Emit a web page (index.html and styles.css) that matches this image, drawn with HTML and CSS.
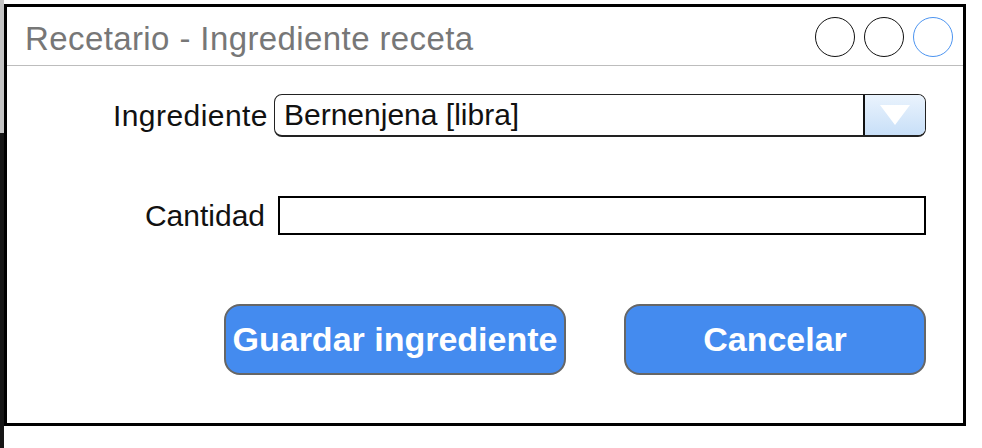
FILE: index.html
```html
<!DOCTYPE html>
<html lang="es">
<head>
<meta charset="utf-8">
<title>Recetario - Ingrediente receta</title>
<link rel="stylesheet" href="styles.css">
</head>
<body>
<div class="page">
  <div class="edge">
    <div class="edge-top"></div>
    <div class="edge-bottom"></div>
  </div>
  <div class="window">
    <div class="titlebar">
      <span class="title">Recetario - Ingrediente receta</span>
      <div class="controls">
        <span class="ctl"></span>
        <span class="ctl"></span>
        <span class="ctl ctl-active"></span>
      </div>
    </div>
    <div class="content">
      <div class="row row-select">
        <label class="label label-ing">Ingrediente</label>
        <div class="select">
          <span class="select-value">Bernenjena [libra]</span>
          <span class="select-btn">
            <svg width="32" height="22" viewBox="0 0 32 22"><polygon points="1,1 31,1 16,21" fill="#ffffff"/></svg>
          </span>
        </div>
      </div>
      <div class="row row-input">
        <label class="label label-qty">Cantidad</label>
        <div class="input"></div>
      </div>
      <div class="actions">
        <button class="btn btn-save">Guardar ingrediente</button>
        <button class="btn btn-cancel">Cancelar</button>
      </div>
    </div>
  </div>
</div>
</body>
</html>
```

FILE: styles.css
```css
html, body {
  margin: 0;
  padding: 0;
  background: #ffffff;
}
body {
  width: 982px;
  height: 448px;
  overflow: hidden;
  font-family: "Liberation Sans", Arial, Helvetica, sans-serif;
}
.page {
  display: flex;
  height: 448px;
}
.edge {
  width: 4px;
  display: flex;
  flex-direction: column;
}
.edge-top {
  height: 133px;
  background: #c4c4c4;
}
.edge-bottom {
  flex: 1;
  background: #161616;
}
.window {
  margin-top: 4px;
  width: 962px;
  height: 422px;
  box-sizing: border-box;
  border: 3px solid #000;
  display: flex;
  flex-direction: column;
  background: #fff;
}
.titlebar {
  height: 58px;
  border-bottom: 1px solid #bdbdbd;
  display: flex;
  align-items: center;
  justify-content: space-between;
  padding: 0 10px 0 18px;
  flex-shrink: 0;
}
.title {
  font-size: 33px;
  color: #777777;
  padding-top: 5px;
  letter-spacing: 0.4px;
}
.controls {
  display: flex;
  gap: 9px;
  padding-top: 2px;
}
.ctl {
  width: 38px;
  height: 38px;
  border: 1.6px solid #111;
  border-radius: 50%;
  display: block;
}
.ctl-active {
  border-color: #4c94f0;
}
.content {
  display: flex;
  flex-direction: column;
  padding-top: 28px;
}
.row {
  display: flex;
  align-items: center;
}
.label {
  font-size: 30px;
  color: #111;
  width: 261px;
  text-align: right;
  flex-shrink: 0;
}
.label-ing {
  letter-spacing: 0.45px;
}
.label-qty {
  width: 258px;
}
.select {
  margin-left: 6px;
  width: 652px;
  height: 43px;
  box-sizing: border-box;
  border: 1.5px solid #222;
  border-bottom-width: 2.5px;
  border-radius: 8px;
  display: flex;
  overflow: hidden;
}
.select-value {
  flex: 1;
  font-size: 30px;
  color: #111;
  padding-left: 9px;
  line-height: 39px;
}
.select-btn {
  width: 60px;
  border-left: 2px solid #111;
  background: linear-gradient(#eaf3fd, #c8dff8);
  display: flex;
  align-items: center;
  justify-content: center;
}
.row-input {
  margin-top: 59px;
}
.input {
  margin-left: 13px;
  width: 648px;
  height: 39px;
  box-sizing: border-box;
  border: 2px solid #000;
}
.actions {
  margin-top: 69px;
  display: flex;
  padding-left: 217px;
  gap: 58px;
}
.btn {
  height: 71px;
  box-sizing: border-box;
  background: #448bef;
  border: 2px solid #666;
  border-radius: 16px;
  color: #fff;
  font-family: "Liberation Sans", Arial, Helvetica, sans-serif;
  font-weight: bold;
  font-size: 34px;
  padding: 0;
}
.btn-save {
  width: 342px;
}
.btn-cancel {
  width: 302px;
}
```
